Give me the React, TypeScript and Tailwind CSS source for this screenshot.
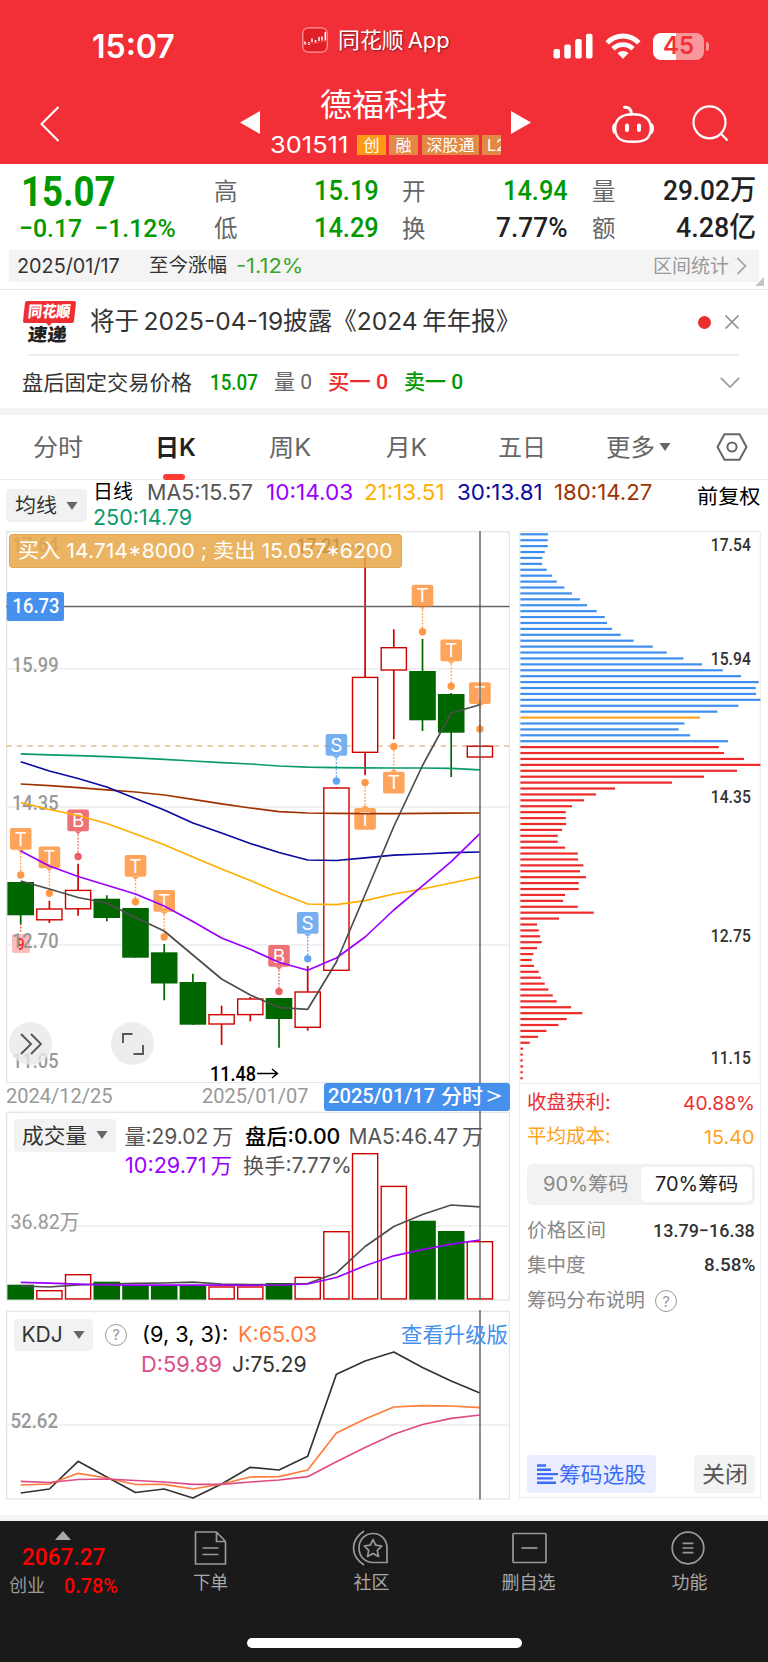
import { useLayoutEffect, useRef, useState, type ReactNode } from "react";

const DIN = "[font-family:Roboto,'Noto_Sans_CJK_SC',sans-serif]";
const THIN = "\u2009";

/** One line of text, condensed or widened to fill the width set by its classes. */
function Fit({ className = "", children }: { className?: string; children: ReactNode }) {
  const box = useRef<HTMLSpanElement>(null);
  const text = useRef<HTMLSpanElement>(null);
  const [scale, setScale] = useState(1);
  useLayoutEffect(() => {
    if (box.current && text.current) setScale(box.current.clientWidth / text.current.offsetWidth);
  }, []);
  return (
    <span ref={box} className={`block shrink-0 whitespace-pre leading-none ${className}`}>
      <span ref={text} className="inline-block origin-left" style={{ transform: `scaleX(${scale})` }}>
        {children}
      </span>
    </span>
  );
}

/* ---------- chart data ---------- */

const STEP = 28.7;
const cx = (i: number) => 20.7 + i * STEP;

type Candle = [up: 0 | 1, top: number, bottom: number, high: number, low: number];
const CANDLES: Candle[] = [
  [0, 882, 915.3, 882, 924],
  [1, 908.3, 920.5, 900.7, 923],
  [1, 889.7, 909.5, 863.7, 915.7],
  [0, 898.7, 918, 895.3, 921.3],
  [0, 908, 957.7, 908, 957.7],
  [0, 952.3, 983.5, 944, 1000.3],
  [0, 982, 1024.7, 973.7, 1024.7],
  [1, 1014, 1024.7, 1005.7, 1045],
  [1, 998.3, 1015.3, 997, 1021.3],
  [0, 998, 1019, 998, 1047.7],
  [1, 991.3, 1028, 966, 1030.7],
  [1, 787.3, 971, 787.3, 971],
  [1, 676.7, 753, 556, 775.3],
  [1, 647, 670.7, 629.3, 739.3],
  [0, 671, 720.3, 639, 731],
  [0, 694, 732.7, 693, 777],
  [1, 745.5, 757.7, 745.5, 757.7],
];

const VOLUMES = [
  1284.7, 1290, 1274, 1281.7, 1285, 1285, 1285, 1286.3, 1286.3, 1283, 1276.7, 1231, 1153, 1185.7, 1220.7, 1231, 1241,
];

const MA_LINES: [string, number[]][] = [
  ["#0b9b6a", [753.8, 754.8, 755.7, 756.6, 757.8, 759.4, 761, 762.6, 764, 766, 767.2, 767.7, 767.9, 768, 768, 768.3, 769.8]],
  ["#9f3300", [784, 785.6, 787.6, 789.8, 792, 795, 799.3, 803.8, 808, 811.6, 813, 813.4, 813.6, 813.6, 813.4, 813.2, 813]],
  ["#0a0aa0", [761.8, 771, 778.5, 787, 798.5, 810, 823, 833, 843.5, 852.5, 860, 860.5, 857.9, 855.2, 854, 852.7, 852]],
  ["#ffae00", [802.5, 809.5, 815.5, 823.5, 834, 844.7, 857, 869, 880.5, 892.7, 904, 904.7, 900.7, 894, 889, 883, 877]],
  ["#9b00ff", [851, 866, 876.5, 885.3, 894, 906, 921.6, 938, 949.3, 962.3, 970.3, 958, 937, 910, 885.8, 861.7, 833.7]],
  ["#4d4d4d", [881, 889, 897.5, 903, 917.5, 931, 955, 979, 995, 1007.5, 1009.3, 962, 894.5, 826.5, 765.5, 713, 704.7]],
];

const VOLUME_LINES: [string, number[]][] = [
  ["#4d4d4d", [1286, 1287, 1284.9, 1284, 1283.3, 1283, 1282.2, 1284, 1284.6, 1284.6, 1283.5, 1273, 1246.5, 1226.5, 1214.5, 1205, 1206.8]],
  ["#9b00ff", [1282.3, 1283.2, 1284.2, 1285, 1285.2, 1285.2, 1285.2, 1285.2, 1285.3, 1285, 1284, 1277.5, 1265.7, 1255.8, 1249.7, 1244.2, 1240]],
];

const KDJ_LINES: [string, number[]][] = [
  ["#333333", [1493, 1489, 1461.3, 1477, 1492.5, 1489, 1498, 1484, 1467.3, 1470, 1456.3, 1374.3, 1361, 1352, 1367.5, 1381, 1393]],
  ["#ff7b3b", [1485, 1484, 1473.3, 1478, 1484.5, 1484.3, 1489, 1484, 1477, 1476.7, 1470, 1433, 1419, 1407, 1405.7, 1406, 1407.7]],
  ["#dd4b86", [1481.3, 1482.5, 1479.5, 1479, 1480.5, 1482, 1484.3, 1484.3, 1482, 1480, 1476.7, 1461.7, 1447.5, 1434.3, 1424.5, 1418.3, 1415]],
];

const TRADE_COLORS = { T: "#ff8b2e", S: "#5199ee", B: "#ea4a50" };
type Trade = [kind: "T" | "S" | "B", index: number, boxTop: number, dot: number];
const TRADES: Trade[] = [
  ["T", 0, 828, 875],
  ["T", 1, 846.5, 893.3],
  ["B", 2, 809.5, 856.5],
  ["T", 4, 855, 901.7],
  ["T", 5, 890, 937],
  ["B", 9, 945, 991.5],
  ["S", 10, 912, 958.7],
  ["S", 11, 734, 781],
  ["T", 12, 808, 782.6],
  ["T", 13, 771.8, 746.5],
  ["T", 14, 584.8, 631.7],
  ["T", 15, 639.4, 686.2],
  ["T", 16, 682.2, 729],
];

const CHIPS = [
  83, 82, 82, 73, 66, 65, 79, 95, 109, 132, 155, 179, 200, 229, 253, 260, 275, 301, 340, 397, 439, 489, 545, 607, 662,
  715, 706, 707, 720, 654, 591, 539, 492, 475, 509, 623, 595, 611, 671, 720, 650, 551, 455, 284, 227, 191, 155, 136,
  136, 137, 125, 112, 112, 134, 172, 173, 189, 179, 197, 175, 175, 134, 128, 172, 220, 116, 50, 55, 59, 64, 50, 39, 34,
  41, 55, 62, 73, 84, 97, 109, 152, 186, 139, 114, 78, 53, 28, 8, 7, 7, 8, 7, 7,
];
const chipColor = (i: number) => (i === 31 ? "#ffa31a" : i < 36 ? "#3f8ff0" : "#ee2b2b");

/* ---------- chart parts ---------- */

function Lines({ data }: { data: [string, number[]][] }) {
  return (
    <>
      {data.map(([color, ys]) => (
        <polyline
          key={color}
          points={ys.map((y, i) => `${cx(i)},${y}`).join(" ")}
          fill="none"
          stroke={color}
          strokeWidth="1.7"
          strokeLinejoin="round"
        />
      ))}
    </>
  );
}

function Label({ x, y, w, size = 20.6, fill = "#999", weight = 500, children }: {
  x: number; y: number; w: number; size?: number; fill?: string; weight?: number; children: string;
}) {
  return (
    <text x={x} y={y} textLength={w} lengthAdjust="spacingAndGlyphs" fontSize={size} fill={fill} fontWeight={weight} className={DIN}>
      {children}
    </text>
  );
}

function Bar({ i, up, top, bottom }: { i: number; up: boolean; top: number; bottom: number }) {
  const x = cx(i) - 13.3;
  return up ? (
    <rect x={x + 0.7} y={top + 0.7} width={25.2} height={bottom - top - 1.4} fill="#fff" stroke="#d00000" strokeWidth="1.4" />
  ) : (
    <rect x={x} y={top} width={26.6} height={bottom - top} fill="#006600" />
  );
}

function TradeMark({ trade: [kind, i, top, dot] }: { trade: Trade }) {
  const x = cx(i);
  const color = TRADE_COLORS[kind];
  const below = top > dot;
  const edge = below ? top : top + 21.8;
  const tip = below ? edge - 3 : edge + 3;
  return (
    <g>
      <g opacity="0.78">
        <rect x={x - 10.8} y={top} width="21.6" height="21.8" rx="2" fill={color} />
        <path d={`M${x - 3.5} ${edge}L${x} ${tip}L${x + 3.5} ${edge}z`} fill={color} />
        <line x1={x} x2={x} y1={tip} y2={dot} stroke={color} strokeWidth="1.4" strokeDasharray="1.8 1.5" />
      </g>
      <circle cx={x} cy={dot} r="3.7" fill={color} opacity="0.88" />
      <text x={x} y={top + 17.6} fontSize="19" fill="#fff" textAnchor="middle" className="[font-family:Inter,sans-serif]">
        {kind}
      </text>
    </g>
  );
}

function KLineChart() {
  return (
    <svg width="504" height="552" viewBox="6 531 504 552" className="block">
      <rect x="6.7" y="531.7" width="502.8" height="551" fill="none" stroke="#e6e6e6" strokeWidth="1.4" />
      {[668.8, 807, 945].map((y) => (
        <line key={y} x1="7" x2="509" y1={y} y2={y} stroke="#ededed" strokeWidth="1.4" />
      ))}
      <path d="M20.7 924V933" stroke="#e33" strokeWidth="1.3" strokeDasharray="1.6 1.4" />
      <rect x="12" y="934" width="18" height="19" rx="2" fill="#ffbcbc" />
      <Label x={17} y={949.5} w={7.5} size={16} fill="#ee2222">9</Label>
      <Label x={12} y={552} w={46.5}>17.64</Label>
      <Label x={296.5} y={552.5} w={45} fill="#333">17.21</Label>
      <path d="M344 546.5H362M357 542L362.3 546.5L357 551" stroke="#333" strokeWidth="1.5" fill="none" />
      <Label x={12} y={671.6} w={46.5}>15.99</Label>
      <Label x={12} y={810} w={46.5}>14.35</Label>
      <Label x={12} y={948} w={46.5}>12.70</Label>
      <Label x={12} y={1068} w={46.5}>11.05</Label>
      <line x1="6" x2="509" y1="746" y2="746" stroke="#dfc096" strokeWidth="1.3" strokeDasharray="5.6 5" />
      {CANDLES.map(([up, top, bottom, high, low], i) => (
        <g key={i}>
          <line x1={cx(i)} x2={cx(i)} y1={high} y2={low} stroke={up ? "#d00000" : "#006600"} strokeWidth="1.7" />
          <Bar i={i} up={up === 1} top={top} bottom={bottom} />
        </g>
      ))}
      <line x1="6" x2="509.5" y1="606.5" y2="606.5" stroke="#666" strokeWidth="1.6" />
      {TRADES.map((t) => (
        <TradeMark key={t[1]} trade={t} />
      ))}
      <Lines data={MA_LINES} />
      <line x1="480" x2="480" y1="531" y2="1083" stroke="#5c5c5c" strokeWidth="1.4" />
      <Label x={210} y={1081} w={46} fill="#000">11.48</Label>
      <path d="M257 1073.5H277.5M272 1069L277.5 1073.5L272 1078" stroke="#000" strokeWidth="1.5" fill="none" />
      <rect x="6.7" y="592" width="57.3" height="29" rx="2" fill="#4690ee" />
      <Label x={12.5} y={613.3} w={47} fill="#fff">16.73</Label>
    </svg>
  );
}

function VolumeChart() {
  return (
    <svg width="504" height="190" viewBox="6 1111 504 190" className="pointer-events-none absolute inset-0">
      <rect x="6.7" y="1112.4" width="502.8" height="187.6" fill="none" stroke="#e6e6e6" strokeWidth="1.4" />
      <line x1="7" x2="509" y1="1226" y2="1226" stroke="#ededed" strokeWidth="1.4" />
      <Label x={10.5} y={1229} w={69} size={21} weight={400}>36.82万</Label>
      {VOLUMES.map((top, i) => (
        <Bar key={i} i={i} up={CANDLES[i][0] === 1} top={top} bottom={1299.6} />
      ))}
      <Lines data={VOLUME_LINES} />
      <line x1="480" x2="480" y1="1111" y2="1300" stroke="#5c5c5c" strokeWidth="1.4" />
    </svg>
  );
}

function KdjChart() {
  return (
    <svg width="504" height="190" viewBox="6 1310 504 190" className="pointer-events-none absolute inset-0">
      <rect x="6.7" y="1311.4" width="502.8" height="187.6" fill="none" stroke="#e6e6e6" strokeWidth="1.4" />
      <line x1="7" x2="509" y1="1425" y2="1425" stroke="#ededed" strokeWidth="1.4" />
      <Label x={10.5} y={1428} w={47.5}>52.62</Label>
      <Lines data={KDJ_LINES} />
      <line x1="480" x2="480" y1="1310" y2="1499.5" stroke="#5c5c5c" strokeWidth="1.4" />
    </svg>
  );
}

function ChipChart() {
  return (
    <svg width="242" height="552" viewBox="519 531 242 552" className="block">
      <path d="M519.7 1083V531.7H760.3V1083" fill="none" stroke="#ececec" strokeWidth="1.2" />
      {CHIPS.map((w, i) => (
        <rect key={i} x="520.4" y={533.2 + i * 5.912} width={w / 3} height="2.2" fill={chipColor(i)} />
      ))}
      {[["17.54", 550.6], ["15.94", 665.3], ["14.35", 803.4], ["12.75", 941.6], ["11.15", 1063.6]].map(([t, y]) => (
        <Label key={t} x={710.8} y={y as number} w={40} size={17.6} fill="#333">{t as string}</Label>
      ))}
    </svg>
  );
}

/* ---------- small pieces ---------- */

function Caret({ className = "" }: { className?: string }) {
  return (
    <svg viewBox="0 0 12 8" className={`h-[8px] w-[12px] shrink-0 ${className}`} fill="#666">
      <path d="M0.5 0H11.5L6 8z" />
    </svg>
  );
}

function Help({ className = "" }: { className?: string }) {
  return (
    <span className={`flex size-[22px] shrink-0 items-center justify-center rounded-full border-[1.5px] border-[#999] text-[15px] leading-none text-[#999] ${className}`}>
      ?
    </span>
  );
}

function Pair({ name, className = "", children }: { name: string; className?: string; children: ReactNode }) {
  return (
    <div className={`flex items-center justify-between ${className}`}>
      <span className="pt-px text-[23.5px] leading-none text-[#666]">{name}</span>
      {children}
    </div>
  );
}

function Header() {
  return (
    <header className="h-[163.5px] bg-[#f22f37] text-white">
      <div className="flex h-[92px] items-center">
        <Fit className="ml-[92px] w-[83px] pt-px text-[32px] font-semibold">15:07</Fit>
        <svg viewBox="0 0 26 26" className="mb-[12px] ml-[127px] size-[26px]">
          <rect x="0.8" y="0.8" width="24.4" height="24.4" rx="5.5" fill="#e01f26" stroke="#ff9a9c" strokeWidth="1.2" />
          <path d="M3 14.5v3.5M7 15v3M10 11.5v3.5M13.5 13v3M17 10v4M20 9.5v4M23.3 5v9" stroke="#fff" strokeWidth="1.5" />
          <path d="M1 18C8 15 16 17 25 13" stroke="#f55" strokeWidth="0.8" fill="none" />
        </svg>
        <Fit className="mb-[10px] ml-[10px] w-[112px] text-[21.5px] [text-shadow:1px_1px_2px_rgba(0,0,0,0.5)]">{`同花顺${THIN}App`}</Fit>
        <svg viewBox="0 0 40 26" className="ml-[103px] h-[26px] w-[40px]" fill="#fff">
          <rect x="0.5" y="16" width="6.5" height="9.5" rx="2" />
          <rect x="11.3" y="11.5" width="6.5" height="14" rx="2" />
          <rect x="22.2" y="6" width="6.5" height="19.5" rx="2" />
          <rect x="33" y="0.8" width="6.5" height="24.7" rx="2" />
        </svg>
        <svg viewBox="0 0 36 26" className="ml-[12px] h-[26px] w-[36px]" fill="none" stroke="#fff" strokeWidth="4.8">
          <path d="M2.2 9.8C11 0.7 25 0.7 33.8 9.8" />
          <path d="M8 15.8C13.5 10.2 22.5 10.2 28 15.8" />
          <path d="M18 25.8L12.5 20.2C15.5 17.3 20.5 17.3 23.5 20.2z" fill="#fff" stroke="none" />
        </svg>
        <div className="ml-[12px] flex h-[27px] w-[51px] items-center justify-center rounded-[8px] bg-[linear-gradient(90deg,#fff_45%,#f8989b_45%)]">
          <Fit className="w-[31px] text-[24px] font-semibold text-[#f22f37]">45</Fit>
        </div>
        <span className="ml-[2px] h-[9px] w-[3px] rounded-r-full bg-[#f8989b]" />
      </div>
      <div className="flex items-start">
        <svg viewBox="0 0 20 36" className="ml-[40px] mt-[13.5px] h-[36px] w-[20px]" fill="none" stroke="#fff" strokeWidth="2">
          <path d="M18.5 1L1.5 18L18.5 35" />
        </svg>
        <svg viewBox="0 0 20 23" className="ml-[180px] mt-[19px] h-[23px] w-[20px]" fill="#fff"><path d="M20 0V23L0 11.5z" /></svg>
        <div className="-mt-[3px] ml-[10px] w-[231px]">
          <Fit className="ml-[50px] h-[34px] w-[128px] text-[32px]">德福科技</Fit>
          <div className="mt-[12px] flex h-[20px] w-[231px] items-center text-[16px] leading-none [overflow-x:clip]">
            <Fit className="w-[78px] text-[23.5px]">301511</Fit>
            <span className="ml-[9px] flex h-[20px] w-[29px] shrink-0 items-center justify-center bg-[#ff9a18]">创</span>
            <span className="ml-[3px] flex h-[20px] w-[29px] shrink-0 items-center justify-center bg-[#e28a45]">融</span>
            <span className="ml-[4px] flex h-[20px] w-[57px] shrink-0 items-center justify-center bg-[#e28a45]">深股通</span>
            <span className="ml-[3px] flex h-[20px] w-[30px] shrink-0 items-center bg-[#e28a45] pl-[5px]">L2</span>
          </div>
        </div>
        <svg viewBox="0 0 20 23" className="ml-[10px] mt-[19px] h-[23px] w-[20px]" fill="#fff"><path d="M0 0V23L20 11.5z" /></svg>
        <svg viewBox="0 0 42 38" className="ml-[81px] mt-[12.5px] h-[38px] w-[42px]" fill="none" stroke="#fff" strokeWidth="2.4" strokeLinecap="round">
          <path d="M12.5 2.2C17 2 19.5 4.5 19.5 9" strokeWidth="3" />
          <path d="M3.5 20C5 13 11 9.3 21 9.3S37 13 38.5 20C39.5 25.5 38 30 35.5 33C33 36 28 36.8 21 36.8S9 36 6.5 33C4 30 2.5 25.5 3.5 20z" />
          <path d="M2.3 19.5C0.9 21.5 0.9 25.5 2.3 27.5M39.7 19.5C41.1 21.5 41.1 25.5 39.7 27.5" />
          <path d="M15 20.5V25M27 20.5V25" strokeWidth="4" />
        </svg>
        <svg viewBox="0 0 37 37" className="ml-[38px] mt-[13px] size-[37px]" fill="none" stroke="#fff" strokeWidth="2.2">
          <circle cx="17.5" cy="17.3" r="16" />
          <path d="M28.8 28.6L35.5 35.5" />
        </svg>
      </div>
    </header>
  );
}

function Quote() {
  const value = `${DIN} text-[28.5px] font-medium`;
  return (
    <section className="h-[126.5px] border-b-[1.5px] border-[#e8e8e8] pt-[9.5px]">
      <div className="ml-[21px] flex h-[36.5px] items-center">
        <Fit className={`${DIN} w-[95px] pt-[2px] text-[42px] font-bold text-[#009900]`}>15.07</Fit>
        <Pair name="高" className="ml-[98px] w-[165px]"><Fit className={`${value} w-[65px] text-[#009900]`}>15.19</Fit></Pair>
        <Pair name="开" className="ml-[23px] w-[166px]"><Fit className={`${value} w-[65px] text-[#009900]`}>14.94</Fit></Pair>
        <Pair name="量" className="ml-[24px] w-[164px]"><Fit className={`${value} w-[93px] text-[#222]`}>29.02万</Fit></Pair>
      </div>
      <div className="ml-[19px] flex h-[36.5px] items-center">
        <Fit className={`${DIN} w-[157px] text-[26.5px] font-medium text-[#009900]`}>−0.17  −1.12%</Fit>
        <Pair name="低" className="ml-[38px] w-[165px]"><Fit className={`${value} w-[65px] text-[#009900]`}>14.29</Fit></Pair>
        <Pair name="换" className="ml-[23px] w-[166px]"><Fit className={`${value} w-[72px] text-[#222]`}>7.77%</Fit></Pair>
        <Pair name="额" className="ml-[24px] w-[164px]"><Fit className={`${value} w-[80px] text-[#222]`}>4.28亿</Fit></Pair>
      </div>
      <div className="relative ml-[9px] mt-[3.5px] flex h-[32px] w-[750px] items-center bg-[#f4f4f4] pt-px text-[#333]">
        <Fit className="ml-[8px] w-[103px] text-[20px]">2025/01/17</Fit>
        <Fit className="ml-[29px] w-[78px] text-[19.5px]">至今涨幅</Fit>
        <Fit className="ml-[9px] w-[67px] text-[20px] text-[#3da52b]">-1.12%</Fit>
        <Fit className="ml-[350px] w-[76px] text-[19px] text-[#999]">区间统计</Fit>
        <svg viewBox="0 0 11 18" className="ml-[7px] h-[18px] w-[11px]" fill="none" stroke="#aaa" strokeWidth="1.8"><path d="M1.5 1L9.5 9L1.5 17" /></svg>
        <svg viewBox="0 0 9 9" className="absolute -bottom-[4px] -right-[5px] size-[9px]" fill="#c4c4c4"><path d="M9 0V9H0z" /></svg>
      </div>
    </section>
  );
}

function Notices() {
  return (
    <section>
      <div className="flex h-[64px] items-center">
        <div className="ml-[22px] flex w-[54px] flex-col items-center">
          <span className="flex h-[22px] w-[51px] -skew-x-6 items-center justify-center rounded-[2px] bg-[#ee2e33]">
            <Fit className="w-[43px] text-[15.5px] font-black text-white">同花顺</Fit>
          </span>
          <svg viewBox="0 0 6 3" className="h-[3px] w-[6px]" fill="#ee2e33"><path d="M0 0H6L3 3z" /></svg>
          <span className="mr-[4px] -skew-x-6">
            <Fit className="w-[39px] text-[18px] font-black text-[#222]">速递</Fit>
          </span>
        </div>
        <Fit className="mb-[2px] ml-[14px] w-[430px] text-[24.5px] text-[#333]">{`将于${THIN}2025-04-19披露《2024${THIN}年年报》`}</Fit>
        <span className="ml-[178px] size-[13px] rounded-full bg-[#ea2f2f]" />
        <svg viewBox="0 0 14 14" className="ml-[14px] size-[14px]" fill="none" stroke="#999" strokeWidth="1.8"><path d="M0.5 0.5L13.5 13.5M13.5 0.5L0.5 13.5" /></svg>
      </div>
      <div className="ml-[28px] h-[1.5px] w-[711px] bg-[#ececec]" />
      <div className="flex h-[52.5px] items-center pt-[2px]">
        <Fit className="ml-[22px] w-[170px] text-[21px] text-[#333]">盘后固定交易价格</Fit>
        <Fit className={`${DIN} ml-[18px] w-[48px] text-[21.5px] font-medium text-[#009900]`}>15.07</Fit>
        <Fit className={`${DIN} ml-[16px] w-[38px] text-[21px] text-[#666]`}>量 0</Fit>
        <Fit className={`${DIN} ml-[16px] w-[60px] text-[21px] font-medium text-[#ee2a2a]`}>买一 0</Fit>
        <Fit className={`${DIN} ml-[16px] w-[59px] text-[21px] font-medium text-[#009900]`}>卖一 0</Fit>
        <svg viewBox="0 0 20 11" className="ml-[257px] h-[11px] w-[20px]" fill="none" stroke="#999" strokeWidth="1.7"><path d="M0.8 0.8L10 10L19.2 0.8" /></svg>
      </div>
      <div className="h-[7px] bg-[#f4f4f4]" />
    </section>
  );
}

function Tabs() {
  return (
    <nav className="flex h-[65px] items-center border-b-[1.5px] border-[#ebebeb] pt-[2px] text-[24px] text-[#666]">
      <Fit className="ml-[33px] w-[50px]">分时</Fit>
      <div className="relative ml-[72px]">
        <Fit className="w-[41px] font-semibold text-[#222]">日K</Fit>
        <span className="absolute -bottom-[20px] left-[8px] h-[6px] w-[22px] rounded-[3px] bg-[#ff3b35]" />
      </div>
      <Fit className="ml-[73px] w-[42px]">周K</Fit>
      <Fit className="ml-[75px] w-[41px]">月K</Fit>
      <Fit className="ml-[71px] w-[48px]">五日</Fit>
      <Fit className="ml-[60px] w-[49px]">更多</Fit>
      <Caret className="mb-[2px] ml-[4px]" />
      <svg viewBox="0 0 32 28" className="mb-[2px] ml-[45px] h-[28px] w-[32px]" fill="none" stroke="#666" strokeWidth="2">
        <path d="M8.5 1.2H23.5L30.5 14L23.5 26.8H8.5L1.5 14z" strokeLinejoin="round" />
        <circle cx="16" cy="14" r="4.6" />
      </svg>
    </nav>
  );
}

function MaLegend() {
  return (
    <div className="flex h-[51px] items-start text-[21.3px]">
      <div className="ml-[6px] mt-[9px] flex h-[33px] w-[81px] items-center rounded-[4px] bg-[#f2f2f2]">
        <Fit className="ml-[9px] w-[42px] text-[20px] text-[#333]">均线</Fit>
        <Caret className="ml-[9px]" />
      </div>
      <div className="ml-[6px] mt-[2px] w-[601px]">
        <div className="flex">
          <Fit className="w-[40px] text-[20.5px] text-black">日线</Fit>
          <Fit className="ml-[14px] w-[106px] text-[#555]">MA5:15.57</Fit>
          <Fit className="ml-[13px] w-[87px] text-[#9b00ff]">10:14.03</Fit>
          <Fit className="ml-[11px] w-[81px] text-[#ffae00]">21:13.51</Fit>
          <Fit className="ml-[12px] w-[86px] text-[#0a0aa0]">30:13.81</Fit>
          <Fit className="ml-[11px] w-[98px] text-[#9f3300]">180:14.27</Fit>
        </div>
        <Fit className="mt-[4px] w-[99px] text-[#0b9b6a]">250:14.79</Fit>
      </div>
      <Fit className="ml-[3px] mt-[7px] w-[64px] text-[20.5px] text-black">前复权</Fit>
    </div>
  );
}

function LeftCharts() {
  return (
    <div className="ml-[6px] w-[504px]">
      <div className="relative">
        <KLineChart />
        <div className="absolute left-[3px] top-[2.5px] flex h-[34px] w-[393px] items-center rounded-[4px] border border-[#dd9a40]/60 bg-[#e8a748]/85 pl-[8px] pt-px">
          <Fit className="w-[375px] text-[20.5px] text-white">买入 14.714*8000 ; 卖出 15.057*6200</Fit>
        </div>
        <span className="absolute left-[3px] top-[491px] flex size-[43px] items-center justify-center rounded-full bg-[#e9e9e9]/80">
          <svg viewBox="0 0 22 22" className="size-[22px]" fill="none" stroke="#555" strokeWidth="1.9"><path d="M1 1L11 11L1 21M11 1L21 11L11 21" /></svg>
        </span>
        <span className="absolute left-[105px] top-[491px] flex size-[43px] items-center justify-center rounded-full bg-[#e9e9e9]/80">
          <svg viewBox="0 0 22 22" className="size-[22px]" fill="none" stroke="#555" strokeWidth="1.9"><path d="M1 10V1H10.5M21 12V21H11.5" /></svg>
        </span>
      </div>
      <div className={`${DIN} flex h-[28px] items-start text-[20px] text-[#999]`}>
        <Fit className="mt-[3px] w-[106px]">2024/12/25</Fit>
        <Fit className="ml-[90px] mt-[3px] w-[106px]">2025/01/07</Fit>
        <div className="ml-[16px] flex h-[28px] w-[186px] items-start rounded-[3px] bg-[#4690ee] pl-[4px] text-[20.5px] text-white">
          <Fit className="mt-[3px] w-[107px] font-medium">2025/01/17</Fit>
          <Fit className="ml-[6px] mt-[4px] w-[42px] font-medium">分时</Fit>
          <svg viewBox="0 0 14 12" className="ml-[4px] mt-[7px] h-[12px] w-[14px]" fill="none" stroke="#fff" strokeWidth="1.8" aria-label=">">
            <path d="M0.6 1L12.8 6L0.6 11" />
          </svg>
        </div>
      </div>
      <div className="relative flex h-[190px] items-start text-[21px] text-[#555]">
        <VolumeChart />
        <div className="relative ml-[7.5px] mt-[8px] flex h-[32.5px] w-[102px] items-center rounded-[4px] bg-[#f2f2f2]">
          <Fit className="ml-[8.5px] w-[65px] text-[#333]">成交量</Fit>
          <Caret className="ml-[9px]" />
        </div>
        <div className="ml-[9px] mt-[15px]">
          <div className="flex">
            <Fit className="w-[109px]">{`量:29.02${THIN}万`}</Fit>
            <Fit className="ml-[11px] w-[95px] font-medium text-black">盘后:0.00</Fit>
            <Fit className="ml-[9px] w-[134px]">{`MA5:46.47${THIN}万`}</Fit>
          </div>
          <div className="mt-[8px] flex">
            <Fit className="w-[107px] text-[#9b00ff]">{`10:29.71${THIN}万`}</Fit>
            <Fit className="ml-[11px] w-[109px]">换手:7.77%</Fit>
          </div>
        </div>
      </div>
      <div className="relative mt-[9px] flex h-[190px] items-start text-[21px]">
        <KdjChart />
        <div className="ml-[7.5px] mt-[8.5px] flex h-[32.5px] w-[79px] items-center rounded-[4px] bg-[#f2f2f2]">
          <Fit className="ml-[8px] w-[41px] text-[#333]">KDJ</Fit>
          <Caret className="ml-[10px]" />
        </div>
        <Help className="ml-[12.5px] mt-[13.5px]" />
        <div className="ml-[15px] mt-[14px]">
          <div className="flex">
            <Fit className="w-[86px] text-black">(9, 3, 3):</Fit>
            <Fit className="ml-[10px] w-[79px] text-[#ff7b3b]">K:65.03</Fit>
            <Fit className="ml-[84px] w-[107px] text-[#4690ee]">查看升级版</Fit>
          </div>
          <div className="mt-[9px] flex">
            <Fit className="-ml-px w-[81px] text-[#dd4b86]">D:59.89</Fit>
            <Fit className="ml-[10px] w-[75px] text-[#333]">J:75.29</Fit>
          </div>
        </div>
      </div>
    </div>
  );
}

function ChipPanel() {
  return (
    <div className="ml-[9px] flex w-[242px] flex-col">
      <ChipChart />
      <div className="flex h-[415px] flex-col border border-[#ececec] pl-[7px] pr-[5px] text-[19.5px] text-[#888]">
        <div className="mt-[7px] flex h-[24px] items-center justify-between text-[#e93030]">
          <Fit className="w-[84px]">收盘获利:</Fit>
          <Fit className="w-[72px] text-[19px]">40.88%</Fit>
        </div>
        <div className="mt-[10px] flex h-[24px] items-center justify-between text-[#ffa31a]">
          <Fit className="w-[84px]">平均成本:</Fit>
          <Fit className="w-[51px] text-[19px]">15.40</Fit>
        </div>
        <div className="mt-[15px] flex h-[41px] w-[228px] items-center rounded-[6px] bg-[#f2f2f2] p-[3px]">
          <Fit className="ml-[13px] w-[86px]">90%筹码</Fit>
          <div className="ml-[12px] flex h-[35px] w-[111px] items-center justify-center rounded-[5px] bg-white">
            <Fit className="w-[83px] text-[#222]">70%筹码</Fit>
          </div>
        </div>
        <div className="mt-[14px] flex h-[24px] items-center justify-between">
          <Fit className="w-[79px]">价格区间</Fit>
          <Fit className={`${DIN} w-[102px] text-[18.5px] font-medium text-[#333]`}>13.79−16.38</Fit>
        </div>
        <div className="mt-[10.5px] flex h-[24px] items-center justify-between">
          <Fit className="w-[59px]">集中度</Fit>
          <Fit className={`${DIN} w-[51px] text-[18.5px] font-medium text-[#333]`}>8.58%</Fit>
        </div>
        <div className="mt-[11.5px] flex h-[24px] items-center">
          <Fit className="w-[118px]">筹码分布说明</Fit>
          <Help className="ml-[10px]" />
        </div>
        <div className="mb-[4px] mt-auto flex h-[38px] w-[228px] items-center justify-between">
          <div className="flex h-full w-[129px] items-center rounded-[4px] bg-[#e9edff]">
            <svg viewBox="0 0 22 20" className="ml-[9px] h-[20px] w-[22px]" fill="none" stroke="#3c6cf4" strokeWidth="2.4">
              <path d="M1 1.5H10M1 5.8H15M1 10.1H22M1 14.4H17M1 18.7H20" />
            </svg>
            <Fit className="ml-px w-[87px] text-[21px] text-[#3c6cf4]">筹码选股</Fit>
          </div>
          <div className="flex h-full w-[61px] items-center justify-center rounded-[4px] bg-[#f3f3f3]">
            <Fit className="w-[46px] text-[22px] text-[#555]">关闭</Fit>
          </div>
        </div>
      </div>
    </div>
  );
}

function NavItem({ label, w, children }: { label: string; w: string; children: ReactNode }) {
  return (
    <div className="flex w-[159px] flex-col items-center pt-[9px]">
      <svg viewBox="0 0 36 36" className="size-[36px]" fill="none" stroke="#999" strokeWidth="1.7">{children}</svg>
      <Fit className={`mt-[7.5px] text-[18px] text-[#a8a8a8] ${w}`}>{label}</Fit>
    </div>
  );
}

function Footer() {
  return (
    <footer className="flex h-[141px] flex-col items-center bg-[#1a1a1a]">
      <div className="flex h-[117px] w-full">
        <div className={`${DIN} w-[131px] shrink-0 pt-[10px]`}>
          <svg viewBox="0 0 16 9" className="ml-[55px] h-[9px] w-[16px]" fill="#aaa"><path d="M8 0L16 9H0z" /></svg>
          <Fit className="ml-[22px] mt-[5px] w-[83px] text-[24.5px] font-medium text-[#ff0000]">2067.27</Fit>
          <div className="mt-[6.5px] flex items-center">
            <Fit className="ml-[9px] w-[36px] text-[18px] text-[#999]">创业</Fit>
            <Fit className="ml-[19px] w-[54px] text-[20.5px] font-medium text-[#ff0000]">0.78%</Fit>
          </div>
        </div>
        <NavItem label="下单" w="w-[35px]">
          <path d="M23.5 2H2.5V34H32.5V11.5M23.5 2L32.5 11.5M23.5 2V11.5H32.5" strokeLinejoin="round" />
          <path d="M9.5 18H25.5M9.5 24.5H25.5" />
        </NavItem>
        <NavItem label="社区" w="ml-[4px] w-[36px]">
          <path d="M35 32.5H21.5C12.5 32.5 7 26 7 18C7 9.5 13 3.5 21 3.5S35 9.5 35 18z" />
          <path d="M12 1C4.5 6 1.5 11.5 1.5 18S4.5 30 12 35" />
          <path d="M21 9.5L23.7 15.2L29.8 16L25.3 20.3L26.5 26.5L21 23.4L15.5 26.5L16.7 20.3L12.2 16L18.3 15.2z" strokeLinejoin="round" />
        </NavItem>
        <NavItem label="删自选" w="w-[54px]">
          <rect x="2" y="3.5" width="33" height="29" rx="1" />
          <path d="M10.5 18H26.5" />
        </NavItem>
        <NavItem label="功能" w="ml-[4px] w-[36px]">
          <circle cx="18" cy="18" r="15.8" />
          <path d="M12.5 13.3H23.5M12.5 18H23.5M12.5 22.7H23.5" />
        </NavItem>
      </div>
      <div className="h-[9.5px] w-[275px] rounded-full bg-white" />
    </footer>
  );
}

export default function App() {
  return (
    <div className="h-[1662px] w-[768px] overflow-hidden bg-white [font-family:Inter,'Noto_Sans_CJK_SC',sans-serif]">
      <Header />
      <Quote />
      <Notices />
      <Tabs />
      <MaLegend />
      <div className="flex h-[984px] items-start">
        <LeftCharts />
        <ChipPanel />
      </div>
      <div className="h-[6px] bg-[#f4f4f4]" />
      <Footer />
    </div>
  );
}
